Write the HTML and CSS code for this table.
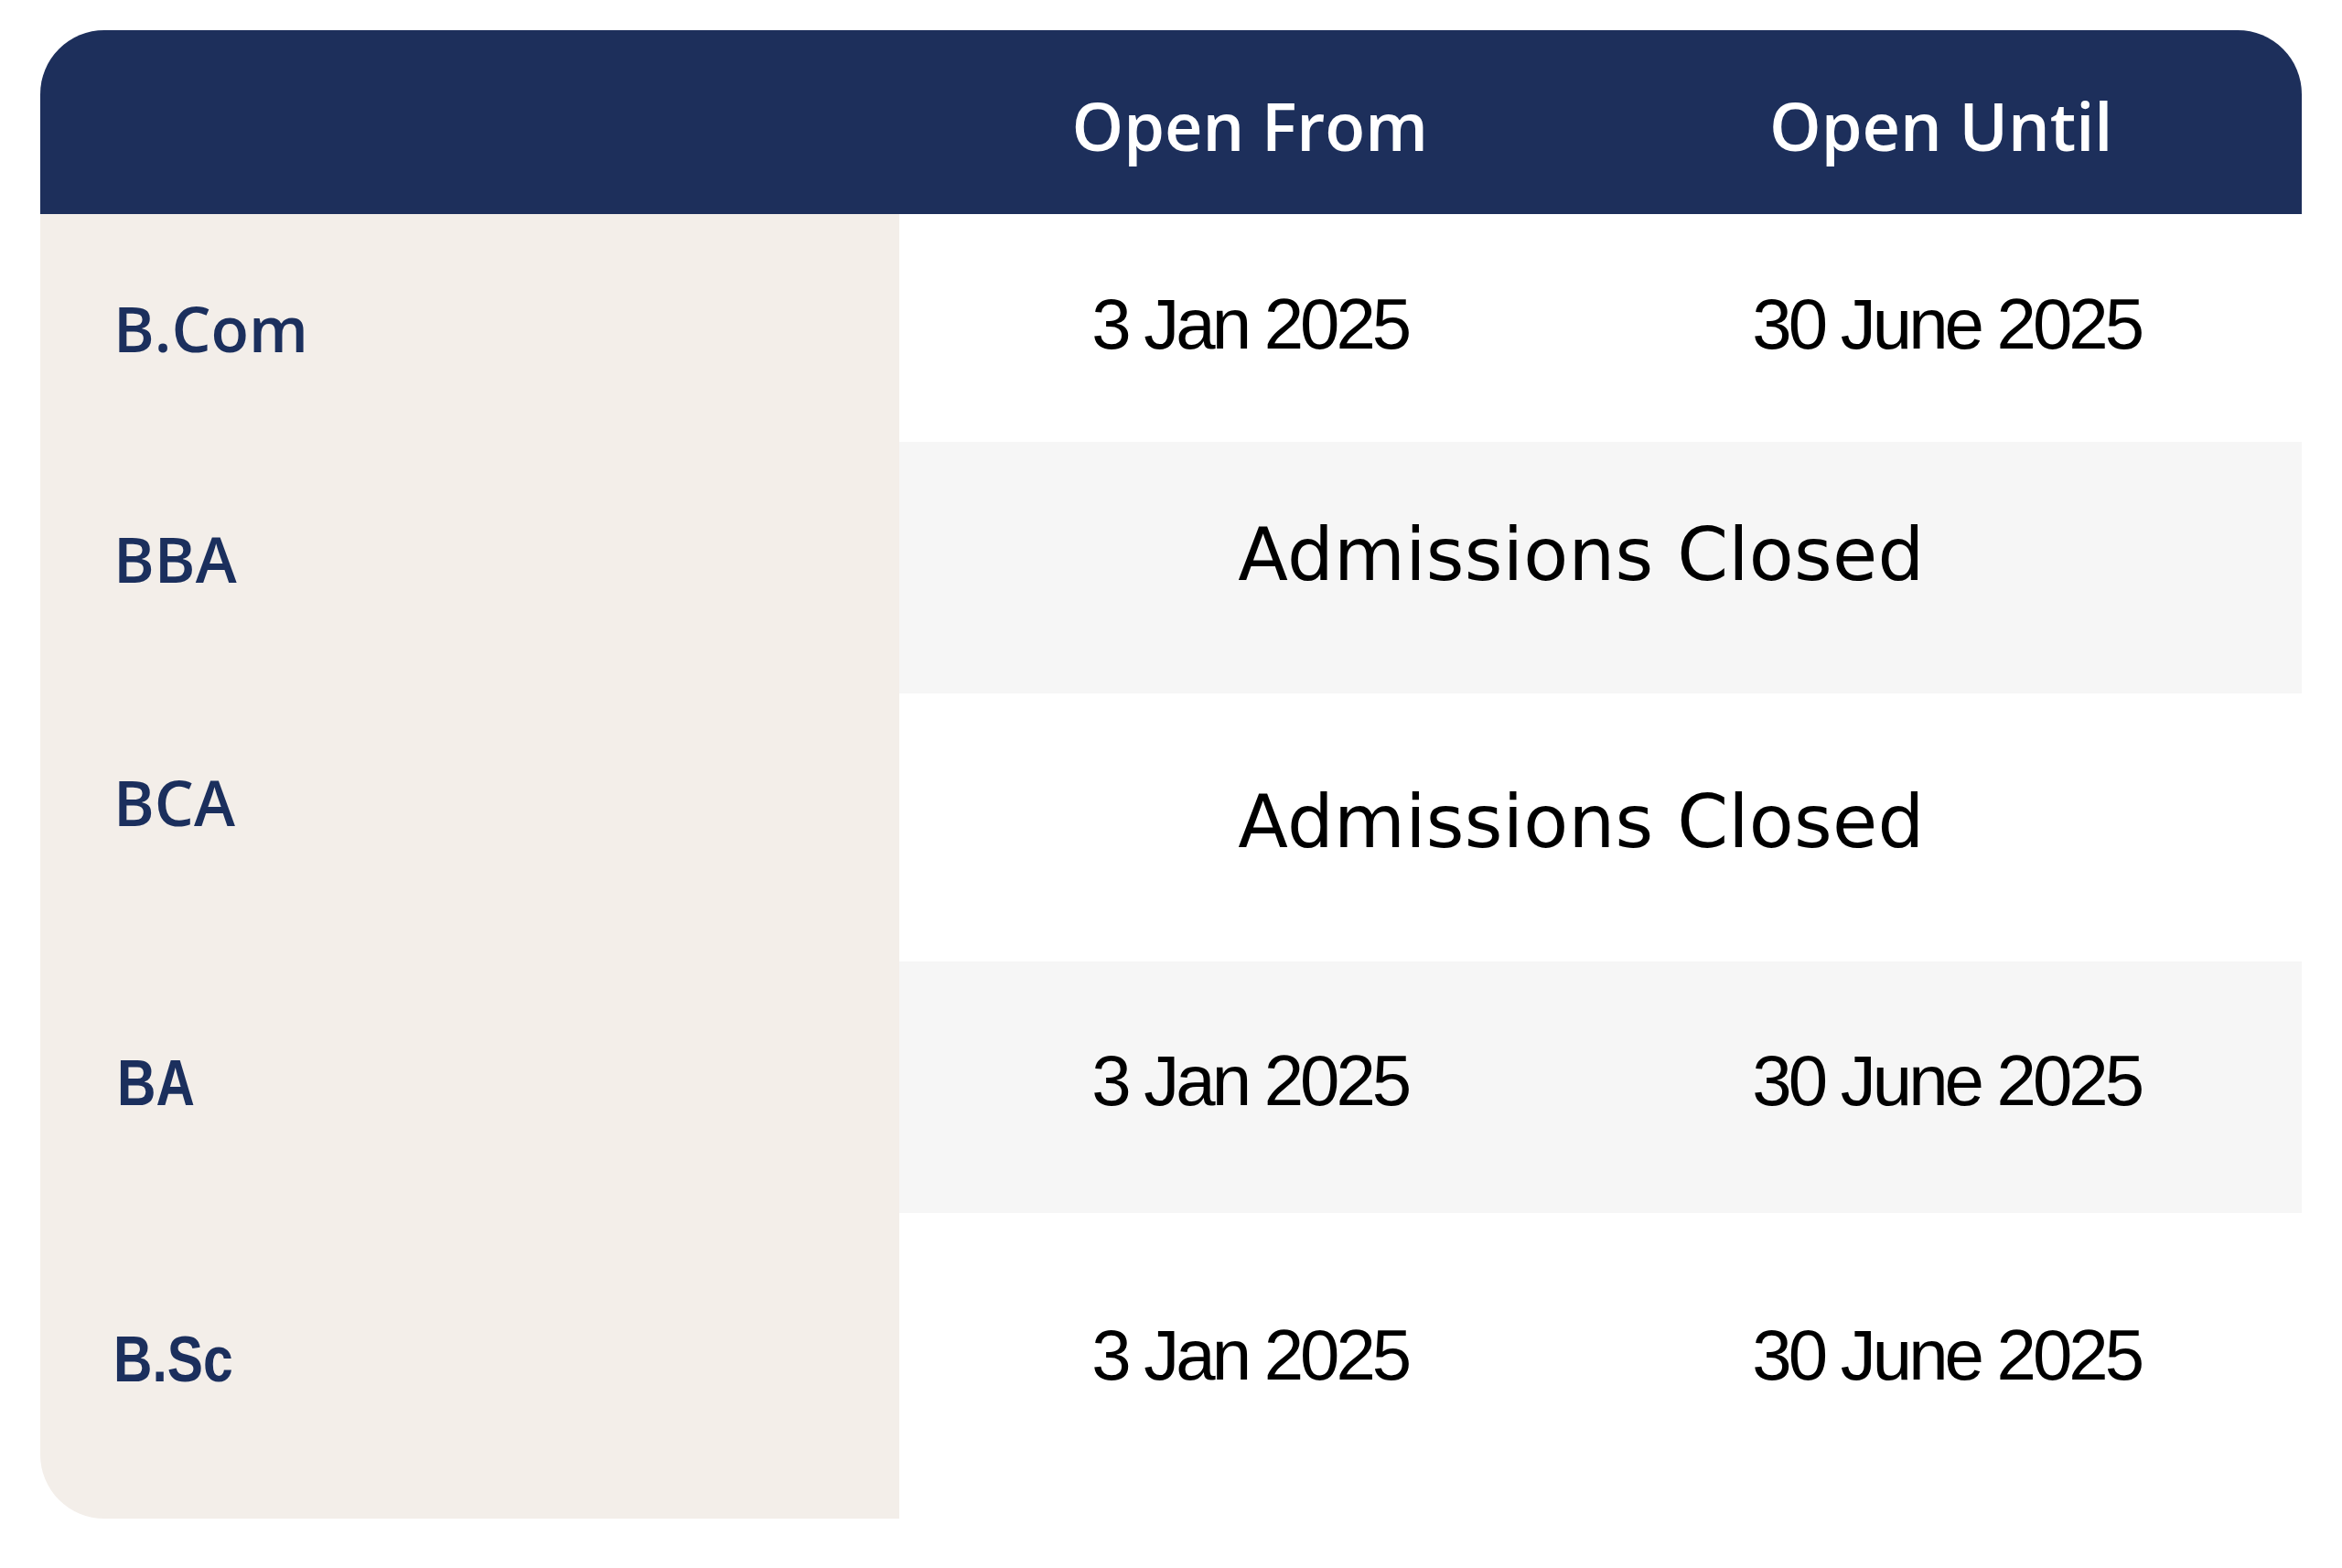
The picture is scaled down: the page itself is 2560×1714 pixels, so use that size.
FILE: index.html
```html
<!DOCTYPE html>
<html lang="en">
<head>
<meta charset="utf-8">
<title>Admissions</title>
<link rel="stylesheet" href="styles.css">
</head>
<body>
<div class="table">
  <div class="head">
    <div class="head-blank"></div>
    <div class="head-cell">Open From</div>
    <div class="head-cell head-until">Open Until</div>
  </div>

  <div class="label r1"><span>B.Com</span></div>
  <div class="date r1 d-up">3 Jan 2025</div>
  <div class="date r1 d-up col3">30 June 2025</div>

  <div class="label r2 l-bba"><span>BBA</span></div>
  <div class="closed r2 alt c-bba">Admissions Closed</div>

  <div class="label r3 l-bca"><span>BCA</span></div>
  <div class="closed r3 c-bca">Admissions Closed</div>

  <div class="label r4 narrow l-ba"><span>BA</span></div>
  <div class="date r4 alt d-mid">3 Jan 2025</div>
  <div class="date r4 alt d-mid col3">30 June 2025</div>

  <div class="label r5 narrow l-bsc"><span>B.Sc</span></div>
  <div class="date r5 d-low">3 Jan 2025</div>
  <div class="date r5 d-low col3">30 June 2025</div>
</div>
</body>
</html>
```

FILE: styles.css
```css
html, body {
  margin: 0;
  padding: 0;
  background: #ffffff;
}

body {
  padding: 33px 0 0 44px;
}

.table {
  width: 2472px;
  display: grid;
  grid-template-columns: 939px 1fr 1fr;
  grid-template-rows: 201px 249px 275px 293px 275px 334px;
  border-radius: 70px 70px 0 70px;
  overflow: hidden;
}

.head {
  grid-column: 1 / 4;
  display: grid;
  grid-template-columns: 939px 1fr 1fr;
  background: #1d2f5b;
}

.head-cell {
  display: flex;
  align-items: center;
  justify-content: center;
  padding-top: 6px;
  font-family: "Open Sans", "Noto Sans", sans-serif;
  font-weight: 600;
  font-size: 72px;
  line-height: 1;
  color: #ffffff;
}

.head-until {
  padding-right: 22px;
}

.label {
  grid-column: 1;
  background: #f3eee9;
  display: flex;
  align-items: center;
  padding-left: 80px;
  font-family: "Open Sans", "Noto Sans", sans-serif;
  font-weight: 600;
  font-size: 68px;
  line-height: 1;
  color: #1b2f5d;
}

.l-bba { padding-bottom: 20px; }
.l-bca { padding-bottom: 56px; }
.l-ba { padding-bottom: 10px; padding-left: 84px; }
.l-bsc { padding-bottom: 14px; }

.narrow {
  font-family: "Liberation Sans", Arial, sans-serif;
  font-weight: 700;
  font-size: 70px;
}

.narrow span {
  display: inline-block;
  transform: scaleX(0.84);
  transform-origin: left center;
}

.r1 { grid-row: 2; }
.r2 { grid-row: 3; }
.r3 { grid-row: 4; }
.r4 { grid-row: 5; }
.r5 { grid-row: 6; }

.date {
  grid-column: 2;
  display: flex;
  align-items: center;
  justify-content: center;
  font-family: "Liberation Sans", Arial, sans-serif;
  font-size: 78px;
  line-height: 1;
  letter-spacing: -4px;
  color: #000000;
  background: #ffffff;
}

.date.col3 {
  grid-column: 3;
  padding-right: 10px;
}

.d-up { padding-bottom: 10px; }
.d-mid { padding-bottom: 16px; }
.d-low { padding-bottom: 24px; }

.closed {
  grid-column: 2 / 4;
  display: flex;
  align-items: center;
  justify-content: center;
  padding-right: 42px;
  font-family: "DejaVu Sans", "Liberation Sans", sans-serif;
  font-size: 80px;
  line-height: 1;
  letter-spacing: 0.3px;
  color: #000000;
  background: #ffffff;
}

.c-bba { padding-bottom: 28px; }
.c-bca { padding-bottom: 12px; }

.alt {
  background: #f6f6f6;
}
```
